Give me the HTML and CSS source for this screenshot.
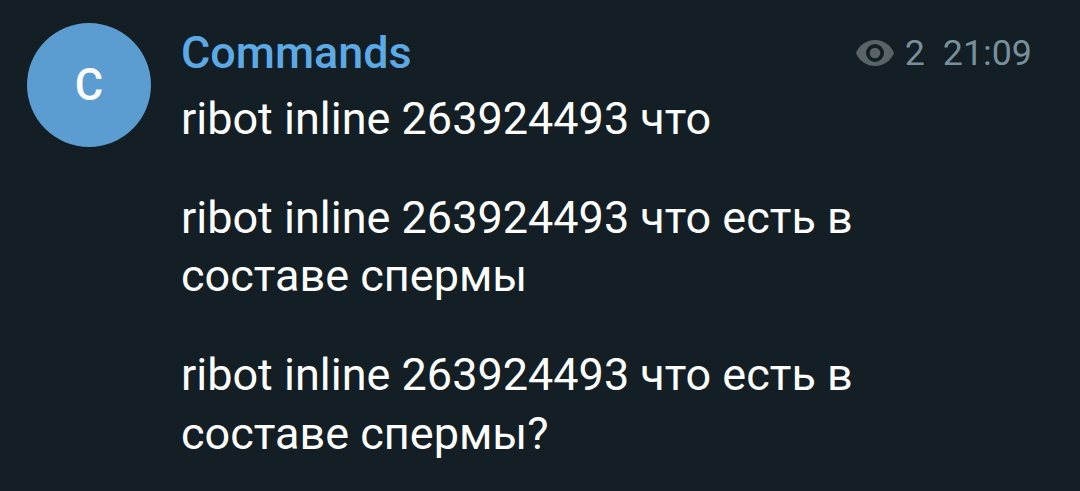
FILE: index.html
```html
<!DOCTYPE html>
<html lang="ru">
<head>
<meta charset="utf-8">
<title>Commands</title>
<link rel="stylesheet" href="styles.css">
</head>
<body>
<main class="chat">
  <div class="avatar">C</div>
  <section class="content">
    <header class="head">
      <h1 class="name">Commands</h1>
      <div class="meta">
        <svg class="eye" viewBox="0 0 38 26" aria-hidden="true">
          <path fill="currentColor" fill-rule="evenodd" d="M19 0C10 0 3 5.500 0 13c3 7.500 10 13 19 13s16-5.500 19-13C35 5.500 28 0 19 0Zm0 4a9 9 0 1 1 0 18a9 9 0 0 1 0-18Z"/>
          <circle fill="currentColor" cx="19" cy="13" r="5.300"/>
        </svg>
        <span class="views">2</span>
        <time class="time">21:09</time>
      </div>
    </header>
    <p class="message">ribot inline 263924493 что</p>
    <p class="message">ribot inline 263924493 что есть в<br>составе спермы</p>
    <p class="message">ribot inline 263924493 что есть в<br>составе спермы?</p>
  </section>
</main>
</body>
</html>
```

FILE: styles.css
```css
body {
  margin: 0;
  background: #131e25;
  font-family: Roboto, sans-serif;
}
.chat {
  display: flex;
  gap: 30px;
  box-sizing: border-box;
  height: 491px;
  padding: 23px 48px 0 27px;
  overflow: hidden;
}
.avatar {
  flex: none;
  width: 124px;
  height: 124px;
  border-radius: 50%;
  background: #5b9dd1;
  color: #fff;
  font-size: 43.5px;
  font-weight: 500;
  line-height: 126px;
  text-align: center;
}
.content {
  flex: 1;
}
.head {
  display: flex;
  justify-content: space-between;
  height: 67px;
}
.name {
  margin: 0;
  color: #5caae5;
  font-size: 44.9px;
  font-weight: 500;
  line-height: 60px;
}
.meta {
  display: flex;
  align-items: center;
  height: 59px;
  color: #78909c;
  font-size: 35.8px;
}
.eye {
  width: 38px;
  height: 26px;
  margin-right: 10.5px;
  color: #596368;
}
.views {
  margin-right: 18px;
}
.message {
  margin: 0 0 40px;
  color: #fff;
  font-size: 45px;
  line-height: 58.7px;
  white-space: nowrap;
}
```
